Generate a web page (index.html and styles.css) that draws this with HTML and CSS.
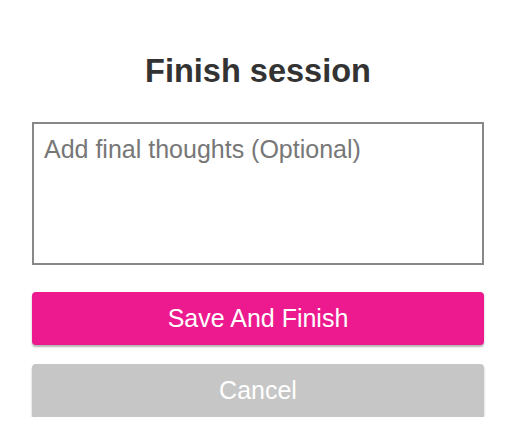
FILE: index.html
```
<!DOCTYPE html>
<html lang="en">
<head>
    <meta charset="UTF-8">
    <meta name="viewport" content="width=device-width, initial-scale=1.0">
    <title>Finish session</title>
    <link rel="stylesheet" href="styles.css">
</head>
<body>
    <div class="container">
        <h1>Finish session</h1>

        <form class="finish-form">
            <textarea class="thoughts" placeholder="Add final thoughts (Optional)"></textarea>

            <div class="actions">
                <button type="submit" class="btn btn-save">Save And Finish</button>
                <button type="button" class="btn btn-cancel">Cancel</button>
            </div>
        </form>
    </div>
</body>
</html>
```

FILE: styles.css
```
body {
    font-family: "Liberation Sans", Arial, sans-serif;
    margin: 0;
    background-color: #fff;
}
.container {
    padding: 53px 28px 0 32px;
}
h1 {
    margin: 0 0 32px;
    text-align: center;
    font-size: 32.5px;
    font-weight: bold;
    color: #333;
    line-height: 37px;
}
.finish-form {
    display: flex;
    flex-direction: column;
}
.thoughts {
    display: block;
    width: 100%;
    height: 143px;
    box-sizing: border-box;
    padding: 11px 10px;
    border: 2px solid #888;
    border-radius: 0;
    font-family: "Liberation Sans", Arial, sans-serif;
    font-size: 25px;
    color: #333;
    resize: none;
    outline: none;
}
.thoughts::placeholder {
    color: #777;
}
.actions {
    display: flex;
    flex-direction: column;
    gap: 19px;
    margin-top: 27px;
}
.btn {
    height: 53px;
    border: none;
    border-radius: 4px;
    font-family: "Liberation Sans", Arial, sans-serif;
    font-size: 25px;
    color: #fff;
    cursor: pointer;
    box-shadow: 0 2px 2px rgba(0, 0, 0, 0.3);
}
.btn-save {
    background-color: #ec1a8e;
}
.btn-cancel {
    background-color: #c6c6c6;
}
```
